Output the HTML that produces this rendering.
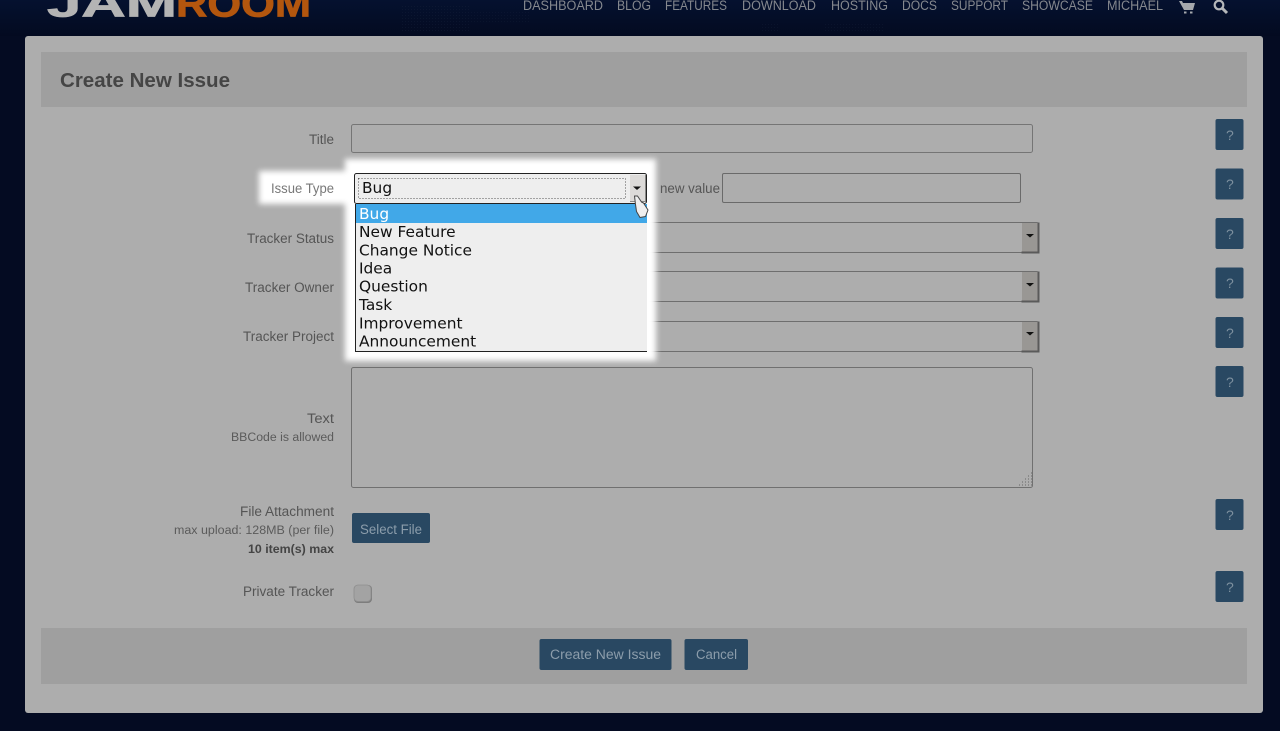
<!DOCTYPE html>
<html lang="en"><head><meta charset="utf-8"><title>Create New Issue</title>
<style>
html,body{margin:0;padding:0;background:#040b22;width:1280px;height:731px;overflow:hidden}
svg{display:block}
text{font-family:"Liberation Sans",sans-serif;fill:#555;font-size:13px}
.n{fill:#85888e;font-size:13.5px}
.l{font-size:13.5px;fill:#555}
.s{font-size:11.5px;fill:#5b5b5b}
.b{font-size:13.5px;fill:#8c9dab}
.q{font-size:14px;fill:#7d909f}
.o{font-family:"DejaVu Sans",sans-serif;font-size:15.4px;fill:#111}
</style></head><body>
<svg width="1280" height="731" viewBox="0 0 1280 731" xmlns="http://www.w3.org/2000/svg">
<defs>
<linearGradient id="bg" x1="0" y1="0" x2="0" y2="1"><stop offset="0" stop-color="#05112f"/><stop offset="1" stop-color="#030a20"/></linearGradient>
<pattern id="dots" width="3" height="3" patternUnits="userSpaceOnUse"><rect width="1" height="1" fill="#1c2740"/></pattern>
<filter id="blur" x="-10%" y="-10%" width="120%" height="120%" color-interpolation-filters="sRGB"><feGaussianBlur stdDeviation="3"/></filter>
<filter id="soft" x="0" y="0" width="100%" height="100%" color-interpolation-filters="sRGB"><feGaussianBlur stdDeviation="0.3"/></filter>
</defs>
<rect width="1280" height="731" fill="#040b22"/>
<g filter="url(#soft)">
<rect width="1280" height="36" fill="url(#bg)"/>
<rect x="400" y="6" width="70" height="26" fill="url(#dots)" opacity=".3"/>
<rect x="470" y="10" width="60" height="12" fill="url(#dots)" opacity=".25"/>
<rect x="760" y="24" width="20" height="8" fill="url(#dots)" opacity=".25"/>
<rect x="825" y="22" width="60" height="10" fill="url(#dots)" opacity=".25"/>

<!-- logo -->
<text x="47" y="16.500" style="fill:#b4b4b4;font-size:38px;font-weight:bold;stroke:#b4b4b4;stroke-width:.8" textLength="130" lengthAdjust="spacingAndGlyphs">JAM</text>
<text x="176" y="16.500" style="fill:#b3560e;font-size:38px;font-weight:bold;stroke:#b3560e;stroke-width:.8" textLength="135" lengthAdjust="spacingAndGlyphs">ROOM</text>

<!-- nav -->
<text class="n" x="523" y="10" textLength="80" lengthAdjust="spacingAndGlyphs">DASHBOARD</text>
<text class="n" x="617" y="10" textLength="34" lengthAdjust="spacingAndGlyphs">BLOG</text>
<text class="n" x="665" y="10" textLength="62" lengthAdjust="spacingAndGlyphs">FEATURES</text>
<text class="n" x="742" y="10" textLength="74" lengthAdjust="spacingAndGlyphs">DOWNLOAD</text>
<text class="n" x="831" y="10" textLength="57" lengthAdjust="spacingAndGlyphs">HOSTING</text>
<text class="n" x="902" y="10" textLength="35" lengthAdjust="spacingAndGlyphs">DOCS</text>
<text class="n" x="951" y="10" textLength="57" lengthAdjust="spacingAndGlyphs">SUPPORT</text>
<text class="n" x="1022" y="10" textLength="71" lengthAdjust="spacingAndGlyphs">SHOWCASE</text>
<text class="n" x="1107" y="10" textLength="56" lengthAdjust="spacingAndGlyphs">MICHAEL</text>
<path d="M1179 1h3l1 2h12l-2 7h-9z M1184 11.500h2.500v2h-2.500z M1190 11.500h2.500v2h-2.500z" fill="#a5a8ad"/>
<circle cx="1219" cy="5" r="4.300" fill="none" stroke="#b5b7ba" stroke-width="2.200"/>
<path d="M1222 8l5 5" stroke="#b5b7ba" stroke-width="3"/>

<!-- panel -->
<rect x="25" y="36" width="1238" height="677" rx="3" fill="#adadad"/>
<rect x="41" y="52" width="1206" height="55" fill="#9f9f9f"/>
<rect x="41" y="628" width="1206" height="56" fill="#9f9f9f"/>
<text x="60" y="87" style="font-size:20px;font-weight:bold;fill:#454545" textLength="170" lengthAdjust="spacingAndGlyphs">Create New Issue</text>

<!-- labels -->
<text class="l" x="309" y="144" textLength="25" lengthAdjust="spacingAndGlyphs">Title</text>
<text class="l" x="247" y="243" textLength="87" lengthAdjust="spacingAndGlyphs">Tracker Status</text>
<text class="l" x="245" y="292" textLength="89" lengthAdjust="spacingAndGlyphs">Tracker Owner</text>
<text class="l" x="243" y="341" textLength="91" lengthAdjust="spacingAndGlyphs">Tracker Project</text>
<text class="l" x="307" y="423" textLength="27" lengthAdjust="spacingAndGlyphs">Text</text>
<text class="s" x="231" y="441" textLength="103" lengthAdjust="spacingAndGlyphs">BBCode is allowed</text>
<text class="l" x="240" y="516" textLength="94" lengthAdjust="spacingAndGlyphs">File Attachment</text>
<text class="s" x="174" y="534" textLength="160" lengthAdjust="spacingAndGlyphs">max upload: 128MB (per file)</text>
<text class="s" x="248" y="553" textLength="86" lengthAdjust="spacingAndGlyphs" style="font-weight:bold;fill:#444">10 item(s) max</text>
<text class="l" x="243" y="596" textLength="91" lengthAdjust="spacingAndGlyphs">Private Tracker</text>

<!-- inputs -->
<rect x="351.500" y="124.500" width="681" height="28" rx="2" fill="#adadad" stroke="#757575"/>
<rect x="722.500" y="173.500" width="298" height="29" rx="1.500" fill="#adadad" stroke="#6a6a6a"/>
<text class="l" x="660" y="193" textLength="60" lengthAdjust="spacingAndGlyphs">new value</text>

<!-- native selects -->
<g id="selects">
<rect x="351.500" y="222.500" width="687" height="30" rx="2" fill="#adadad" stroke="#6e6e6e"/>
<rect x="1022" y="223" width="16" height="29" fill="#999794"/><path d="M1021.500 252.500h17v-30" fill="none" stroke="#5a5a5a" stroke-width="2"/><path d="M1026 234h8l-4 3.500z" fill="#111"/>
<rect x="351.500" y="271.500" width="687" height="30" rx="2" fill="#adadad" stroke="#6e6e6e"/>
<rect x="1022" y="272" width="16" height="29" fill="#999794"/><path d="M1021.500 301.500h17v-30" fill="none" stroke="#5a5a5a" stroke-width="2"/><path d="M1026 283h8l-4 3.500z" fill="#111"/>
<rect x="351.500" y="321.500" width="687" height="30" rx="2" fill="#adadad" stroke="#6e6e6e"/>
<rect x="1022" y="322" width="16" height="29" fill="#999794"/><path d="M1021.500 351.500h17v-30" fill="none" stroke="#5a5a5a" stroke-width="2"/><path d="M1026 332h8l-4 3.500z" fill="#111"/>
</g>

<!-- textarea -->
<rect x="351.500" y="367.500" width="681" height="120" rx="2" fill="#adadad" stroke="#707070"/>
<path d="M1019 485h1M1022 485h1M1025 485h1M1028 485h1M1031 485h1M1022 482h1M1025 482h1M1028 482h1M1031 482h1M1025 479h1M1028 479h1M1031 479h1M1028 476h1M1031 476h1M1031 473h1" stroke="#8a8a8a" stroke-width="2"/>

<!-- select file -->
<rect x="352" y="513" width="78" height="30" rx="2" fill="#294862"/>
<text class="b" x="360" y="534" textLength="62" lengthAdjust="spacingAndGlyphs">Select File</text>

<!-- checkbox -->
<rect x="354" y="585" width="18" height="18" rx="4" fill="#7d7d7d"/>
<rect x="354" y="585" width="17" height="16.500" rx="4" fill="#a3a3a3" stroke="#8e8e8e" stroke-width=".8"/>

<!-- help buttons -->
<g>
<rect x="1215.500" y="119" width="28" height="31" rx="2" fill="#294862"/><text class="q" x="1226" y="140">?</text>
<rect x="1215.500" y="168.500" width="28" height="31" rx="2" fill="#294862"/><text class="q" x="1226" y="189">?</text>
<rect x="1215.500" y="218" width="28" height="31" rx="2" fill="#294862"/><text class="q" x="1226" y="239">?</text>
<rect x="1215.500" y="267.500" width="28" height="31" rx="2" fill="#294862"/><text class="q" x="1226" y="288">?</text>
<rect x="1215.500" y="317" width="28" height="31" rx="2" fill="#294862"/><text class="q" x="1226" y="338">?</text>
<rect x="1215.500" y="366" width="28" height="31" rx="2" fill="#294862"/><text class="q" x="1226" y="387">?</text>
<rect x="1215.500" y="499" width="28" height="31" rx="2" fill="#294862"/><text class="q" x="1226" y="520">?</text>
<rect x="1215.500" y="571" width="28" height="31" rx="2" fill="#294862"/><text class="q" x="1226" y="592">?</text>
</g>

<!-- footer buttons -->
<rect x="539.500" y="639" width="132" height="31" rx="2" fill="#294862"/>
<text class="b" x="550" y="659" textLength="111" lengthAdjust="spacingAndGlyphs">Create New Issue</text>
<rect x="684.500" y="639" width="63.500" height="31" rx="2" fill="#294862"/>
<text class="b" x="696" y="659" textLength="41" lengthAdjust="spacingAndGlyphs">Cancel</text>
</g>

<!-- spotlight -->
<g filter="url(#blur)" fill="#fff">
<rect x="345" y="159" width="311" height="202"/>
<rect x="259" y="171" width="90" height="33"/>
</g>
<text class="l" x="271" y="193" textLength="63" lengthAdjust="spacingAndGlyphs" style="fill:#787878">Issue Type</text>

<!-- open select -->
<rect x="354.500" y="173.500" width="292" height="30" rx="2" fill="#eeeeee" stroke="#222"/>
<rect x="358.500" y="178.500" width="267" height="20" fill="none" stroke="#555" stroke-dasharray="1 2"/>
<rect x="630" y="175" width="16" height="27" fill="#dcdad8"/>
<path d="M630 201.500h16M645.500 175v27" stroke="#8a8a88"/>
<path d="M633 186.500h8l-4 3.500z" fill="#111"/>
<text class="o" x="362" y="193">Bug</text>

<rect x="355" y="204" width="292" height="148" fill="#eeeeee"/>
<path d="M355.500 204v147.500H647" fill="none" stroke="#222"/>
<rect x="356" y="204" width="291" height="19" fill="#41a8e8"/>
<text class="o" x="359" y="219" style="fill:#fff">Bug</text>
<text class="o" x="359" y="237">New Feature</text>
<text class="o" x="359" y="255.500">Change Notice</text>
<text class="o" x="359" y="273.500">Idea</text>
<text class="o" x="359" y="291.500">Question</text>
<text class="o" x="359" y="310">Task</text>
<text class="o" x="359" y="328.500">Improvement</text>
<text class="o" x="359" y="346.500">Announcement</text>

<!-- cursor -->
<path d="M634.500 196l3 0 4 6 2 1 4.500 7-2.500 6.500-5.500 1-3.500-6-1-7z" fill="#efefef" stroke="#444" stroke-width="1" stroke-linejoin="round"/>
</svg>
</body></html>
